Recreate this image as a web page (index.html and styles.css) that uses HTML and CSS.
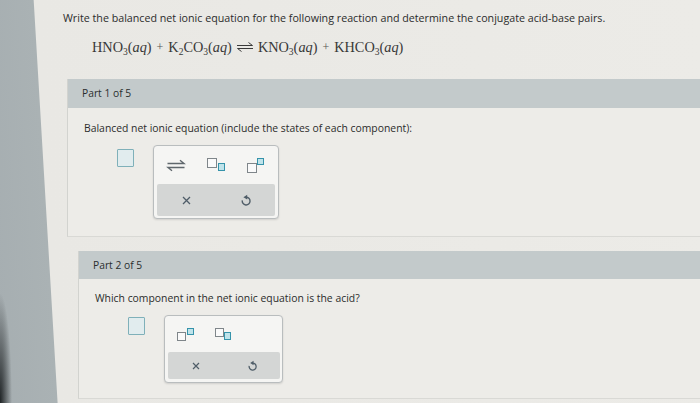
FILE: index.html
```html
<!DOCTYPE html>
<html lang="en">
<head>
<meta charset="utf-8">
<title>Net ionic equation</title>
<link rel="stylesheet" href="styles.css">
</head>
<body>
<div class="screen">
  <div class="content">
    <p class="question">Write the balanced net ionic equation for the following reaction and determine the conjugate acid-base pairs.</p>
    <div class="equation">
      <span>HNO<sub>3</sub>(<i>aq</i>)</span>
      <span class="plus">+</span>
      <span>K<sub>2</sub>CO<sub>3</sub>(<i>aq</i>)</span>
      <svg class="eq-arrow" width="18" height="12" viewBox="0 0 18 12"><path d="M1 4.5H16.5L12.5 1.5M17 7.5H1.5L5.5 10.5" fill="none" stroke="#3a3a3a" stroke-width="1"/></svg>
      <span>KNO<sub>3</sub>(<i>aq</i>)</span>
      <span class="plus">+</span>
      <span>KHCO<sub>3</sub>(<i>aq</i>)</span>
    </div>

    <section class="part part-one">
      <div class="part-head">Part 1 of 5</div>
      <div class="part-body">
        <p class="prompt">Balanced net ionic equation (include the states of each component):</p>
        <div class="answer-row">
          <span class="answer-box"></span>
          <div class="toolbar">
            <div class="tools">
              <svg class="tool" width="20" height="13" viewBox="0 0 20 13"><path d="M1.5 4.5H18L14 1.2M18.5 8.5H2L6 11.8" fill="none" stroke="#5f676c" stroke-width="1.4"/></svg>
              <svg class="tool" width="19" height="14" viewBox="0 0 19 14"><rect x="0.5" y="0.5" width="9" height="9" fill="#fafafa" stroke="#7f868a"/><rect x="11.5" y="5.5" width="6" height="7" fill="#bfe3ea" stroke="#3593aa"/></svg>
              <svg class="tool" width="17" height="15" viewBox="0 0 17 15"><rect x="0.5" y="5.5" width="9" height="9" fill="#fafafa" stroke="#7f868a"/><rect x="10.5" y="0.5" width="6" height="6" fill="#bfe3ea" stroke="#3593aa"/></svg>
            </div>
            <div class="actions">
              <svg width="9" height="9" viewBox="0 0 9 9"><path d="M1 1L8 8M8 1L1 8" stroke="#4f5d68" stroke-width="1.3"/></svg>
              <svg width="10" height="13" viewBox="0 0 10 13"><path d="M5 3.2A3.9 3.9 0 1 1 1.3 6.4" fill="none" stroke="#4f5d68" stroke-width="1.4"/><path d="M2.4 3.2L6.2 0.8V5.6Z" fill="#4f5d68"/></svg>
            </div>
          </div>
        </div>
      </div>
    </section>

    <section class="part part-two">
      <div class="part-head">Part 2 of 5</div>
      <div class="part-body">
        <p class="prompt">Which component in the net ionic equation is the acid?</p>
        <div class="answer-row">
          <span class="answer-box"></span>
          <div class="toolbar">
            <div class="tools">
              <svg class="tool" width="17" height="13" viewBox="0 0 17 13"><rect x="0.5" y="4.5" width="8" height="8" fill="#fafafa" stroke="#7f868a"/><rect x="10.5" y="0.5" width="6" height="6" fill="#bfe3ea" stroke="#3593aa"/></svg>
              <svg class="tool" width="16" height="12" viewBox="0 0 16 12"><rect x="0.5" y="0.5" width="8" height="8" fill="#fafafa" stroke="#7f868a"/><rect x="9.5" y="4.5" width="6" height="7" fill="#bfe3ea" stroke="#3593aa"/></svg>
            </div>
            <div class="actions">
              <svg width="8" height="8" viewBox="0 0 8 8"><path d="M1 1L7 7M7 1L1 7" stroke="#4f5d68" stroke-width="1.2"/></svg>
              <svg width="9" height="12" viewBox="0 0 10 13"><path d="M5 3.2A3.9 3.9 0 1 1 1.3 6.4" fill="none" stroke="#4f5d68" stroke-width="1.4"/><path d="M2.4 3.2L6.2 0.8V5.6Z" fill="#4f5d68"/></svg>
            </div>
          </div>
        </div>
      </div>
    </section>
  </div>
</div>
</body>
</html>
```

FILE: styles.css
```css
html, body {
  margin: 0;
  padding: 0;
}

body {
  width: 700px;
  height: 403px;
  overflow: hidden;
  font-family: "Open Sans", "DejaVu Sans", sans-serif;
  color: #2e2e2e;
}

.screen {
  width: 700px;
  height: 403px;
  overflow: hidden;
  background:
    radial-gradient(ellipse 12px 110px at 0 100%, #1e2224 0, rgba(30,34,36,0) 100%),
    linear-gradient(86.6deg, #a6aeb1 0, #aab2b4 57px, #e9e8e4 58px, #ecebe7 100%);
}

.content {
  display: flex;
  flex-direction: column;
  align-items: flex-start;
  padding: 11px 0 0 63px;
}

.question {
  margin: 0;
  font-size: 10.7px;
  line-height: 14px;
  white-space: nowrap;
  color: #2c2c2c;
}

.equation {
  display: flex;
  align-items: center;
  gap: 3px;
  margin: 12px 0 0 29px;
  font-family: "Liberation Serif", "Times New Roman", serif;
  font-size: 14.3px;
  line-height: 20px;
  height: 20px;
  color: #383838;
  white-space: nowrap;
}

.equation sub {
  font-size: 9.5px;
  line-height: 0;
  vertical-align: -3px;
}

.plus {
  font-size: 12px;
  color: #555;
  padding: 0 2px;
}

.eq-arrow {
  margin: 0 1px;
}

.part {
  display: flex;
  flex-direction: column;
  width: 700px;
  border-left: 1px solid #d2d3cf;
  border-bottom: 1px solid #d9d9d5;
}

.part-one {
  margin: 22px 0 0 4px;
}

.part-two {
  margin: 14px 0 0 15px;
}

.part-head {
  height: 29px;
  line-height: 29px;
  padding-left: 14px;
  font-size: 10.3px;
  color: #2a2e2e;
  background: #c3cacb;
}

.part-two .part-head {
  height: 28px;
  line-height: 28px;
}

.part-body {
  display: flex;
  flex-direction: column;
  align-items: flex-start;
  background: #edece8;
}

.part-one .part-body {
  padding: 13px 0 17px 16px;
}

.part-two .part-body {
  padding: 12px 0 15px 16px;
}

.prompt {
  margin: 0;
  font-size: 10.4px;
  line-height: 14px;
  white-space: nowrap;
  color: #2c2c2c;
}

.answer-row {
  display: flex;
  align-items: flex-start;
  margin-top: 10px;
}

.answer-box {
  width: 15px;
  height: 16px;
  border: 1px solid #7fb0b9;
  border-radius: 1px;
  background: #e1ecee;
}

.part-one .answer-box {
  margin: 4px 19px 0 33px;
}

.part-two .answer-box {
  margin: 2px 19px 0 33px;
}

.toolbar {
  display: flex;
  flex-direction: column;
  border: 1px solid #b9bdbe;
  border-radius: 4px;
  background: #f5f5f3;
  box-shadow: 0 1px 2px rgba(0,0,0,0.12);
}

.part-one .toolbar {
  width: 124px;
  height: 72px;
}

.part-two .toolbar {
  width: 117px;
  height: 66px;
}

.tools {
  display: flex;
  align-items: center;
  flex: 1;
}

.part-one .tools {
  padding-left: 12px;
  gap: 21px;
}

.part-two .tools {
  padding-left: 12px;
  gap: 21px;
}

.actions {
  display: grid;
  grid-template-columns: 1fr 1fr;
  align-items: center;
  justify-items: center;
  background: #d4d6d5;
  border-radius: 2px;
}

.part-one .actions {
  height: 32px;
  margin: 0 3px 2px 3px;
}

.part-two .actions {
  height: 27px;
  margin: 0 2px 3px 3px;
}
```
